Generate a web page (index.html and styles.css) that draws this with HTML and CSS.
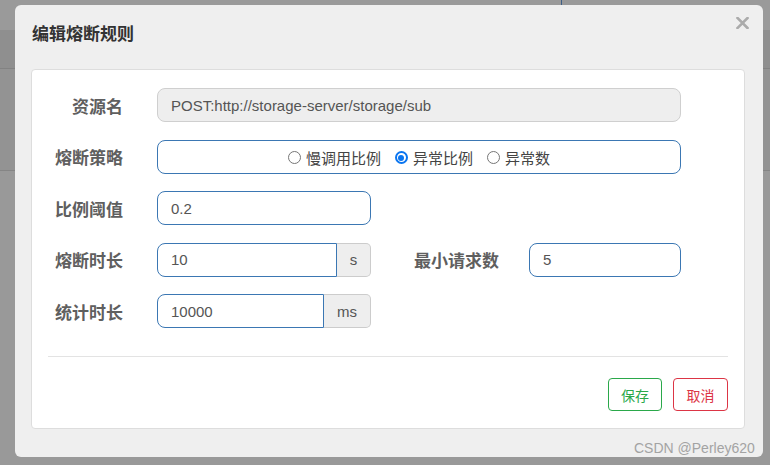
FILE: index.html
```html
<!DOCTYPE html>
<html lang="zh-CN">
<head>
<meta charset="utf-8">
<title>编辑熔断规则</title>
<link rel="stylesheet" href="styles.css">
</head>
<body>
<div class="backdrop">
  <div class="band band-top"><span class="tab-line"></span></div>
  <div class="band band-head"></div>
  <div class="band band-mid"></div>
  <div class="band band-low"></div>
</div>

<div class="modal">
  <div class="modal-header">
    <h4 class="modal-title">编辑熔断规则</h4>
    <span class="close" aria-label="关闭">
      <svg width="13" height="12" viewBox="0 0 13 12"><path d="M1.5 1 L11.5 11 M11.5 1 L1.5 11" stroke="#ababab" stroke-width="2.6" stroke-linecap="square" fill="none"/></svg>
    </span>
  </div>

  <div class="panel">
    <div class="form-row">
      <label class="label">资源名</label>
      <div class="input input-disabled w-full">POST:http://storage-server/storage/sub</div>
    </div>

    <div class="form-row">
      <label class="label">熔断策略</label>
      <div class="input input-focus w-full radios">
        <span class="radio"><span class="dot"></span>慢调用比例</span>
        <span class="radio"><span class="dot checked"></span>异常比例</span>
        <span class="radio"><span class="dot"></span>异常数</span>
      </div>
    </div>

    <div class="form-row">
      <label class="label">比例阈值</label>
      <div class="input input-focus w-small">0.2</div>
    </div>

    <div class="form-row">
      <label class="label">熔断时长</label>
      <div class="group">
        <div class="input input-focus group-input w-dur">10</div>
        <div class="addon w-s">s</div>
      </div>
      <label class="label label-inline">最小请求数</label>
      <div class="input input-focus w-min">5</div>
    </div>

    <div class="form-row">
      <label class="label">统计时长</label>
      <div class="group">
        <div class="input input-focus group-input w-stat">10000</div>
        <div class="addon w-ms">ms</div>
      </div>
    </div>

    <hr class="divider">

    <div class="actions">
      <button class="btn btn-save">保存</button>
      <button class="btn btn-cancel">取消</button>
    </div>
  </div>

  <div class="watermark">CSDN @Perley620</div>
</div>
</body>
</html>
```

FILE: styles.css
```css
* { box-sizing: border-box; }

html, body {
  margin: 0;
  padding: 0;
  width: 770px;
  height: 465px;
  overflow: hidden;
}

body {
  font-family: "Liberation Sans", "Noto Sans CJK SC", Arial, sans-serif;
  background: #999999;
  position: relative;
}

/* backdrop (dimmed page underneath) */
.backdrop {
  display: flex;
  flex-direction: column;
}
.band { width: 100%; }
.band-top {
  height: 30px;
  background: #9a9a9a;
  position: relative;
}
.tab-line {
  position: absolute;
  left: 561px;
  top: 0;
  width: 1px;
  height: 6px;
  background: #3f5f86;
}
.band-head {
  height: 39px;
  background: #8f8f8f;
  border-bottom: 1px solid #828282;
}
.band-mid {
  height: 102px;
  background: #939393;
  border-bottom: 1px solid #858585;
}
.band-low {
  height: 293px;
  background: #999999;
}

/* modal */
.modal {
  position: absolute;
  left: 15px;
  top: 5px;
  width: 748px;
  height: 452px;
  background: #efefef;
  border-radius: 6px;
  display: flex;
  flex-direction: column;
}

.modal-header {
  height: 64px;
  padding: 19px 0 0 17px;
  position: relative;
}

.modal-title {
  margin: 0;
  font-size: 17px;
  line-height: 21px;
  font-weight: bold;
  color: #333333;
}

.close {
  position: absolute;
  right: 14px;
  top: 12px;
  width: 13px;
  height: 12px;
  display: block;
}
.close svg { display: block; }

.panel {
  margin-left: 16px;
  width: 714px;
  height: 360px;
  background: #ffffff;
  border: 1px solid #dddddd;
  border-radius: 4px;
  padding: 18px 0 0 0;
  display: flex;
  flex-direction: column;
  gap: 17.5px;
}

.form-row {
  display: flex;
  align-items: center;
  height: 34px;
}

.label {
  width: 91px;
  margin-right: 34px;
  text-align: right;
  font-size: 17px;
  font-weight: bold;
  color: #5f5f5f;
  white-space: nowrap;
}

.label-inline {
  width: 83px;
  margin-left: 43px;
  margin-right: 32px;
}

.input {
  height: 34px;
  border: 1px solid #cccccc;
  border-radius: 8px;
  padding: 0 13px;
  font-size: 15px;
  color: #555555;
  display: flex;
  align-items: center;
  background: #ffffff;
  white-space: nowrap;
}

.input-disabled {
  background: #eeeeee;
  border-color: #cfcfcf;
}

.input-focus {
  border-color: #3b77b3;
}

.w-full { width: 524px; }
.w-small { width: 214px; }
.w-dur { width: 180px; }
.w-stat { width: 167px; }
.w-min { width: 152px; }

.radios {
  justify-content: center;
  gap: 0;
  padding-top: 2px;
  color: #444444;
}

.radio {
  display: inline-flex;
  align-items: center;
  font-size: 15px;
  margin: 0 7px;
}

.dot {
  width: 13px;
  height: 13px;
  border-radius: 50%;
  border: 1px solid #767676;
  background: #ffffff;
  margin-right: 5px;
  display: inline-block;
  position: relative;
}
.dot.checked {
  border: 2px solid #0a75f0;
}
.dot.checked::after {
  content: "";
  position: absolute;
  left: 1.5px;
  top: 1.5px;
  width: 6px;
  height: 6px;
  border-radius: 50%;
  background: #0a75f0;
}

.group {
  display: flex;
  height: 34px;
}

.group-input {
  border-radius: 8px 0 0 8px;
}

.addon {
  height: 34px;
  background: #eeeeee;
  border: 1px solid #cccccc;
  border-left: none;
  border-radius: 0 5px 5px 0;
  font-size: 15px;
  color: #555555;
  display: flex;
  align-items: center;
  justify-content: center;
}
.w-s { width: 34px; }
.w-ms { width: 47px; }

.divider {
  margin: 10px 16px 0 16px;
  border: none;
  border-top: 1px solid #e3e3e3;
  height: 0;
}

.actions {
  display: flex;
  justify-content: flex-end;
  gap: 11px;
  margin: 4px 16px 0 0;
}

.btn {
  height: 33px;
  background: #ffffff;
  border-radius: 4px;
  font-family: "Liberation Sans", "Noto Sans CJK SC", sans-serif;
  font-size: 14px;
  padding: 0;
  cursor: pointer;
}
.btn-save {
  width: 54px;
  border: 1px solid #2aa84a;
  color: #2aa84a;
}
.btn-cancel {
  width: 55px;
  border: 1px solid #dc3545;
  color: #dc3545;
}

.watermark {
  position: absolute;
  left: 619px;
  top: 435px;
  font-size: 14px;
  color: #a3a3a3;
  white-space: nowrap;
}
```
